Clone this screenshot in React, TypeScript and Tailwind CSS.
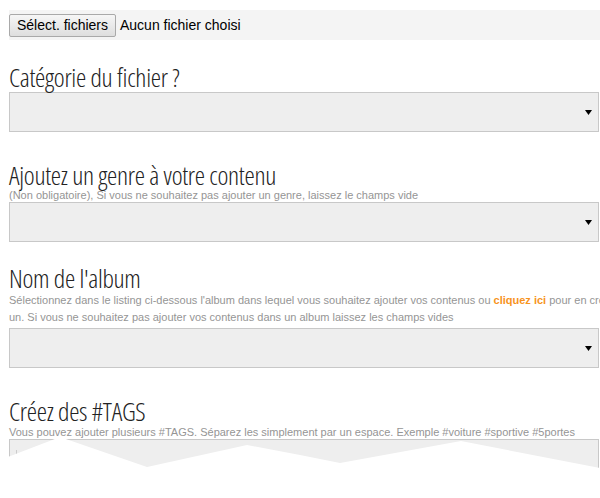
const heading = "font-['Open_Sans',sans-serif] font-light [font-stretch:75%] text-[26px] leading-[32px] text-[#222] tracking-[-0.3px]";
const desc = "font-['Liberation_Sans',Arial,sans-serif] text-[11px] text-[#959595]";

function SelectBox() {
  return (
    <div className="h-10 w-[590px] bg-[#eee] border border-[#c8c8c8] flex items-center justify-end pr-[6px]">
      <svg width="7" height="5" viewBox="0 0 7 5" className="mt-[1px]">
        <path d="M0 0h7L3.5 5z" fill="#000" />
      </svg>
    </div>
  );
}

export default function App() {
  return (
    <div className="relative w-[600px] h-[498px] overflow-hidden bg-white">
      <div className="pl-[9px] pt-[10px]">
        {/* file input row */}
        <div className="h-[30px] bg-[#f4f4f4] flex items-center gap-1 font-['Liberation_Sans',Arial,sans-serif] text-[14px] text-black">
          <button className="h-[23px] w-[107px] mt-[1px] border border-[#a9a9a9] rounded-[2px] bg-gradient-to-b from-[#f6f6f6] to-[#dedede] text-[14px]">
            Sélect. fichiers
          </button>
          <span>Aucun fichier choisi</span>
        </div>

        <h2 className={`${heading} mt-[21px]`}>Catégorie du fichier ?</h2>
        <div className="mt-[-1px]">
          <SelectBox />
        </div>

        <h2 className={`${heading} mt-[27px]`}>Ajoutez un genre à votre contenu</h2>
        <p className={`${desc} leading-[12px] -mt-[2px]`}>
          (Non obligatoire), Si vous ne souhaitez pas ajouter un genre, laissez le champs vide
        </p>
        <div className="mt-[1px]">
          <SelectBox />
        </div>

        <h2 className={`${heading} mt-[20px]`}>Nom de l'album</h2>
        <p className={`${desc} leading-[17px] w-[622px] -mt-[2px]`}>
          Sélectionnez dans le listing ci-dessous l'album dans lequel vous souhaitez ajouter vos contenus ou{" "}
          <a className="font-bold text-[#f7941d]">cliquez ici</a> pour en créer un. Si vous ne souhaitez pas ajouter vos
          contenus dans un album laissez les champs vides
        </p>
        <div className="mt-[2px]">
          <SelectBox />
        </div>

        <h2 className={`${heading} mt-[27px]`}>Créez des #TAGS</h2>
        <p className={`${desc} leading-[13px] -mt-[1px]`}>
          Vous pouvez ajouter plusieurs #TAGS. Séparez les simplement par un espace. Exemple #voiture #sportive #5portes
        </p>
        <div className="h-10 w-[590px] bg-[#eee] border border-[#c8c8c8] pl-[6px] pt-[10px]">
          <span className="block w-px h-[6px] bg-[#ccc]" />
        </div>
      </div>

      {/* torn paper edge */}
      <svg className="absolute left-0 bottom-0" width="600" height="70" viewBox="0 428 600 70">
        <path d="M0 460 L60 437 L147 467 L247 445 L300 455 L340 463 L461 441 L600 468 L600 498 L0 498 Z" fill="#fff" />
      </svg>
    </div>
  );
}
